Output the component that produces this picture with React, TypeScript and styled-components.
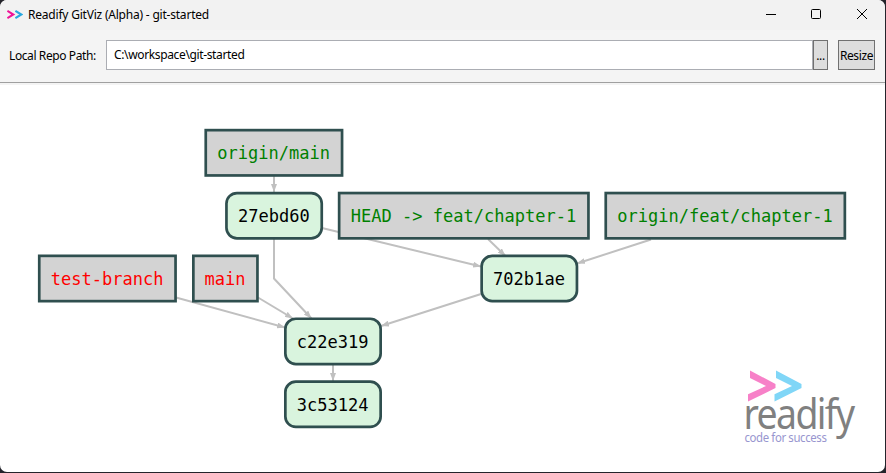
import React from 'react';
import styled, { createGlobalStyle } from 'styled-components';

const GlobalStyle = createGlobalStyle`
  * { box-sizing: border-box; }
  body { margin: 0; background: #1d1d24; overflow: hidden; }
`;

const Desktop = styled.div`
  width: 886px;
  height: 473px;
  padding: 0 1px 1px 0;
  background: #24242b;
`;

const Window = styled.main`
  display: flex;
  flex-direction: column;
  width: 885px;
  height: 472px;
  overflow: hidden;
  border-radius: 7px;
  background: #fff;
  color: #000;
  font-family: 'Noto Sans', 'Open Sans', sans-serif;
`;

const TitleBar = styled.header`
  display: flex;
  align-items: center;
  height: 30px;
  flex: none;
  padding-left: 7px;
  background: #f2f2f2;
`;

const Label = styled.span<{ $spacing: number }>`
  font-size: 12px;
  letter-spacing: ${(p) => p.$spacing}px;
  line-height: 16px;
  white-space: pre;
`;

const AppIcon = styled.svg`
  flex: none;
  margin-right: 5px;
`;

const WindowControls = styled.div`
  display: flex;
  margin-left: auto;
`;

const ControlButton = styled.button`
  display: grid;
  place-items: center;
  width: 46px;
  height: 30px;
  padding: 0 0 2px 0;
  border: 0;
  background: transparent;
`;

const Toolbar = styled.div`
  display: flex;
  align-items: flex-start;
  flex: none;
  height: 53px;
  padding: 10px 10px 0 9px;
  background: #f4f4f4;
  border-bottom: 1px solid #a0a0a0;
`;

const PathLabel = styled.label`
  display: flex;
  width: 97px;
  padding-top: 8px;
`;

const PathField = styled.div`
  flex: 1;
  display: flex;
  align-items: center;
  height: 30px;
  padding: 0 7px;
  background: #fff;
  border: 1px solid #abadb3;
`;

const ToolButton = styled.button<{ $width: number; $gap: number }>`
  display: flex;
  align-items: center;
  justify-content: center;
  width: ${(p) => p.$width}px;
  height: 30px;
  margin-left: ${(p) => p.$gap}px;
  padding: 1px 0 0;
  border: 1px solid #707070;
  background: #ddd;
  color: #000;
  font-family: inherit;
`;

const Canvas = styled.section`
  flex: 1;
  min-height: 0;
  border-top: 2px solid #f4f4f4;
`;

const Graph = styled.svg`
  display: block;
`;

const NodeShape = styled.rect<{ $kind: Kind }>`
  fill: ${(p) => (p.$kind === 'commit' ? '#d9f4de' : '#d3d3d3')};
  stroke: #2f4f4f;
  stroke-width: 2.7px;
`;

const NodeText = styled.text<{ $kind: Kind }>`
  fill: ${(p) => ({ commit: '#000', remote: '#008000', local: '#f00' })[p.$kind]};
  font-family: 'DejaVu Sans Mono', monospace;
  font-size: 17.04px;
  text-anchor: middle;
  white-space: pre;
`;

const EdgeLine = styled.path`
  fill: none;
  stroke: #c0c0c0;
  stroke-width: 2px;
`;

const BrandName = styled.text`
  font-family: 'Noto Sans', sans-serif;
  font-size: 41.5px;
  letter-spacing: -1.8px;
  fill: #808080;
`;

const BrandSlogan = styled.text`
  font-family: 'Noto Sans', sans-serif;
  font-size: 12px;
  letter-spacing: -0.4px;
  fill: #9896cf;
`;

type Kind = 'commit' | 'remote' | 'local';
type NodeData = { text: string; x: number; y: number; w: number; kind: Kind };

const nodes: NodeData[] = [
  { text: 'origin/main', x: 204.4, y: 128.8, w: 139, kind: 'remote' },
  { text: '27ebd60', x: 225.1, y: 191.7, w: 98, kind: 'commit' },
  { text: 'HEAD -> feat/chapter-1', x: 337.8, y: 191.7, w: 252, kind: 'remote' },
  { text: 'origin/feat/chapter-1', x: 604.4, y: 191.7, w: 241.8, kind: 'remote' },
  { text: 'test-branch', x: 37.9, y: 254.5, w: 139, kind: 'local' },
  { text: 'main', x: 192, y: 254.5, w: 66.8, kind: 'local' },
  { text: '702b1ae', x: 480.3, y: 254.5, w: 98, kind: 'commit' },
  { text: 'c22e319', x: 284, y: 317.4, w: 98, kind: 'commit' },
  { text: '3c53124', x: 284, y: 380.3, w: 98, kind: 'commit' },
];

const edges = [
  'M274 176V192',
  'M322 228L481 266.5',
  'M274 239V278.5L311.5 318.5',
  'M488 239L505.5 256',
  'M651 239.5L577 263.5',
  'M176 297.5L285 327.5',
  'M258 297.5L293 318.5',
  'M481 294L381 326',
  'M333 365V381',
];

export default function App() {
  return (
    <>
      <GlobalStyle />
      <Desktop>
        <Window>
          <TitleBar>
            <AppIcon width="16" height="12" viewBox="0 0 16 12" fill="none" strokeWidth="2.1">
              <path d="M.4 1.8L6.3 5.5.4 9.2" stroke="#ee1598" />
              <path d="M8.4 1.8L14.3 5.5 8.4 9.2" stroke="#28a8e0" />
            </AppIcon>
            <Label $spacing={-0.21}>Readify GitViz (Alpha) - git-started</Label>
            <WindowControls>
              <ControlButton aria-label="Minimize">
                <svg width="12" height="12"><path d="M2 6.5H12" stroke="#000" /></svg>
              </ControlButton>
              <ControlButton aria-label="Maximize">
                <svg width="12" height="12"><rect x="1.5" y="1.5" width="9" height="9" rx="1" fill="none" stroke="#000" /></svg>
              </ControlButton>
              <ControlButton aria-label="Close">
                <svg width="12" height="12"><path d="M1 1L11 11M11 1L1 11" stroke="#000" /></svg>
              </ControlButton>
            </WindowControls>
          </TitleBar>
          <Toolbar>
            <PathLabel><Label $spacing={-0.4}>Local Repo Path:</Label></PathLabel>
            <PathField><Label $spacing={-0.36}>{'C:\\workspace\\git-started'}</Label></PathField>
            <ToolButton $width={15} $gap={0}><Label $spacing={-0.4}>...</Label></ToolButton>
            <ToolButton $width={37} $gap={10}><Label $spacing={-0.38}>Resize</Label></ToolButton>
          </Toolbar>
          <Canvas>
            <Graph width="885" height="387" viewBox="0 85 885 387">
              <defs>
                <marker id="arrow" viewBox="0 0 8 6" refX="8" refY="3" markerWidth="8" markerHeight="6" markerUnits="userSpaceOnUse" orient="auto">
                  <path d="M0 0L8 3L0 6Z" fill="#c0c0c0" />
                </marker>
              </defs>
              {edges.map((d) => <EdgeLine key={d} d={d} markerEnd="url(#arrow)" />)}
              {nodes.map((n) => (
                <g key={n.text}>
                  <NodeShape
                    $kind={n.kind}
                    x={n.x + 1.35}
                    y={n.y + 1.35}
                    width={n.w - 2.7}
                    height={45.3}
                    rx={n.kind === 'commit' ? 10.5 : 0}
                  />
                  <NodeText $kind={n.kind} x={n.x + n.w / 2 - 0.3} y={n.y + 30.3}>{n.text}</NodeText>
                </g>
              ))}
              <path d="M750 370.5L775.5 384V388L748 401.5V394.3L766 386 750 378Z" fill="#f781c8" />
              <path d="M776 370.5L801.5 384V388L774.5 401.5V394.3L792 386 776 378Z" fill="#80d6f7" />
              <BrandName x="743.5" y="429" textLength="110" lengthAdjust="spacingAndGlyphs">readify</BrandName>
              <BrandSlogan x="744.5" y="441.5" textLength="82" lengthAdjust="spacingAndGlyphs">code for success</BrandSlogan>
            </Graph>
          </Canvas>
        </Window>
      </Desktop>
    </>
  );
}
